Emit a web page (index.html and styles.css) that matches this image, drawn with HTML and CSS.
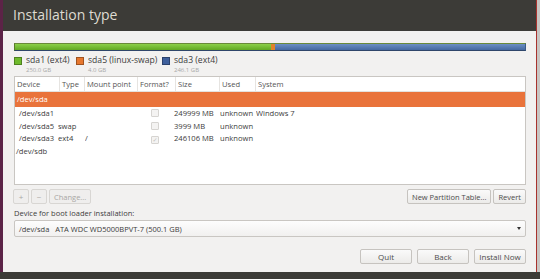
FILE: index.html
```html
<!DOCTYPE html>
<html lang="en">
  <head>
    <meta charset="UTF-8" />
    <title>Installation type</title>
    <link rel="stylesheet" href="styles.css">
  </head>
  <body>
    <div class="desk-left"></div>
    <div class="window">
      <div class="titlebar">Installation type</div>
      <div class="content">
        <div class="diskbar">
          <div class="seg green" style="width: 50.2%"></div>
          <div class="seg orange" style="width: 0.8%"></div>
          <div class="seg blue" style="width: 49%"></div>
        </div>
        <div class="legend">
          <div class="item first">
            <span class="swatch green"></span>
            <div><div class="lname">sda1 (ext4)</div><div class="lsize">250.0 GB</div></div>
          </div>
          <div class="item second">
            <span class="swatch orange"></span>
            <div><div class="lname">sda5 (linux-swap)</div><div class="lsize">4.0 GB</div></div>
          </div>
          <div class="item">
            <span class="swatch blue"></span>
            <div><div class="lname">sda3 (ext4)</div><div class="lsize">246.1 GB</div></div>
          </div>
        </div>

        <div class="table">
          <div class="row head">
            <span class="c-dev">Device</span>
            <span class="c-type">Type</span>
            <span class="c-mount">Mount point</span>
            <span class="c-fmt">Format?</span>
            <span class="c-size">Size</span>
            <span class="c-used">Used</span>
            <span class="c-sys">System</span>
          </div>
          <div class="row sel"><span class="c-dev">/dev/sda</span></div>
          <div class="row">
            <span class="c-dev sub">/dev/sda1</span>
            <span class="c-type"></span>
            <span class="c-mount"></span>
            <span class="c-fmt"><i class="check"></i></span>
            <span class="c-size">249999 MB</span>
            <span class="c-used">unknown</span>
            <span class="c-sys">Windows 7</span>
          </div>
          <div class="row">
            <span class="c-dev sub">/dev/sda5</span>
            <span class="c-type">swap</span>
            <span class="c-mount"></span>
            <span class="c-fmt"><i class="check"></i></span>
            <span class="c-size">3999 MB</span>
            <span class="c-used">unknown</span>
            <span class="c-sys"></span>
          </div>
          <div class="row">
            <span class="c-dev sub">/dev/sda3</span>
            <span class="c-type">ext4</span>
            <span class="c-mount">/</span>
            <span class="c-fmt"><i class="check on">&#10003;</i></span>
            <span class="c-size">246106 MB</span>
            <span class="c-used">unknown</span>
            <span class="c-sys"></span>
          </div>
          <div class="row"><span class="c-dev">/dev/sdb</span></div>
        </div>

        <div class="tools">
          <button class="btn small" disabled>+</button>
          <button class="btn small" disabled>&minus;</button>
          <button class="btn" disabled>Change...</button>
          <div class="spacer"></div>
          <button class="btn">New Partition Table...</button>
          <button class="btn">Revert</button>
        </div>

        <div class="bootlabel">Device for boot loader installation:</div>
        <div class="combo">
          <span>/dev/sda&nbsp;&nbsp;&nbsp;ATA WDC WD5000BPVT-7 (500.1 GB)</span>
          <span class="arrow"></span>
        </div>

        <div class="actions">
          <button class="btn wide">Quit</button>
          <button class="btn wide">Back</button>
          <button class="btn wide">Install Now</button>
        </div>
      </div>
    </div>
    <div class="desk-right"></div>
    <div class="panel"></div>
  </body>
</html>
```

FILE: styles.css
```css
html, body {
  margin: 0;
  height: 279px;
  overflow: hidden;
}
body {
  display: flex;
  position: relative;
  font-family: "Open Sans", "DejaVu Sans", sans-serif;
  background: #d9d6d1;
}
.desk-left {
  width: 3px;
  background: #5c2347;
}
.desk-right {
  width: 3px;
  background: #c8c5c2;
  border-left: 1px solid #a8322e;
}
.window {
  width: 533px;
  background: #f2f1f0;
  display: flex;
  flex-direction: column;
}
.titlebar {
  height: 31px;
  background: #3c3b37;
  color: #dfdbd2;
  font-size: 14px;
  line-height: 29px;
  padding-left: 10px;
}
.content {
  padding: 12px 10px 0 11px;
}
.diskbar {
  display: flex;
  height: 6px;
  border: 1px solid #4a4a4a;
  border-color: #6a8a3a #3b5a86 #2f466a #5a7a2a;
}
.seg.green { background: linear-gradient(#8cd04a, #62a824); }
.seg.orange { background: #e0832a; }
.seg.blue { background: linear-gradient(#6c8fc4, #4569a0); }

.legend {
  display: flex;
  height: 22px;
  padding-top: 3px;
}
.item {
  display: flex;
  white-space: nowrap;
}
.item.first { width: 62px; }
.item.second { width: 86px; }
.swatch {
  flex: none;
  width: 6px;
  height: 6px;
  margin: 3px 4px 0 0;
  border: 1px solid rgba(0, 0, 0, 0.3);
}
.swatch.green { background: #6fba2c; }
.swatch.orange { background: #e6772e; }
.swatch.blue { background: #3e5f9c; }
.lname {
  font-size: 8.6px;
  line-height: 12px;
  color: #3c3c3c;
}
.lsize {
  font-size: 6px;
  line-height: 8px;
  color: #a8a8a8;
}

.table {
  height: 107px;
  background: #fff;
  border: 1px solid #c9c6c2;
  font-size: 7.6px;
  color: #3c3c3c;
}
.row {
  display: flex;
  height: 12.6px;
  line-height: 12.6px;
}
.row span {
  box-sizing: border-box;
  white-space: nowrap;
  overflow: hidden;
}
.head {
  height: 14px;
  line-height: 14px;
  color: #555;
  border-bottom: 1px solid #e4e2df;
}
.head span {
  border-right: 1px solid #e6e4e1;
  padding-left: 2px;
}
.head .c-sys { border-right: 0; }
.sel {
  height: 15px;
  line-height: 15px;
  background: #e9733b;
  color: #fff;
  padding-left: 1px;
}
.c-dev { width: 45px; padding-left: 1px; }
.c-dev.sub { padding-left: 4px; }
.c-type { width: 25px; }
.c-mount { width: 53px; }
.c-fmt { width: 38px; }
.c-size { width: 44px; }
.c-used { width: 36px; }
.c-sys { flex: 1; }
.row:not(.head) .c-fmt {
  padding-left: 13px;
}
.row:not(.head) .c-type,
.row:not(.head) .c-size {
  margin-left: -2px;
  margin-right: 2px;
}
.check {
  display: inline-block;
  width: 6px;
  height: 6px;
  border: 1px solid #d6d4d1;
  border-radius: 1px;
  background: #f4f3f2;
  vertical-align: -1px;
  font-style: normal;
  font-size: 6px;
  line-height: 6px;
  color: #c0bebb;
  text-align: center;
}

button {
  font-family: inherit;
}
.btn {
  height: 15px;
  padding: 0 4px;
  font-size: 7.5px;
  color: #4c4c4c;
  background: linear-gradient(#fafafa, #ecebe9);
  border: 1px solid #c6c3bf;
  border-radius: 2px;
  margin-left: 2px;
}
.btn:disabled {
  color: #a9a7a4;
  background: #efeeed;
  border-color: #d8d6d3;
}
.btn.small {
  width: 16px;
  padding: 0;
  font-size: 8px;
}
.tools {
  display: flex;
  margin-top: 4px;
  margin-left: -1px;
}
.tools .btn:first-child { margin-left: 0; }
.spacer { flex: 1; }
.bootlabel {
  margin-top: 3px;
  font-size: 7.5px;
  color: #3c3c3c;
  height: 12px;
  line-height: 12px;
}
.combo {
  display: flex;
  justify-content: space-between;
  align-items: center;
  height: 15px;
  margin-top: 1px;
  padding: 0 4px 0 4px;
  border: 1px solid #c9c6c2;
  border-radius: 2px;
  background: linear-gradient(#fdfdfd, #f1f0ef);
  font-size: 7.5px;
  color: #3c3c3c;
}
.arrow {
  width: 0;
  height: 0;
  border-left: 2.5px solid transparent;
  border-right: 2.5px solid transparent;
  border-top: 3px solid #333;
}
.actions {
  display: flex;
  justify-content: flex-end;
  margin-top: 12px;
}
.btn.wide {
  width: 52px;
  margin-left: 5px;
  font-size: 8px;
}
.panel {
  position: absolute;
  left: 0;
  right: 0;
  bottom: 0;
  height: 7px;
  background: #3c3b37;
}
```
